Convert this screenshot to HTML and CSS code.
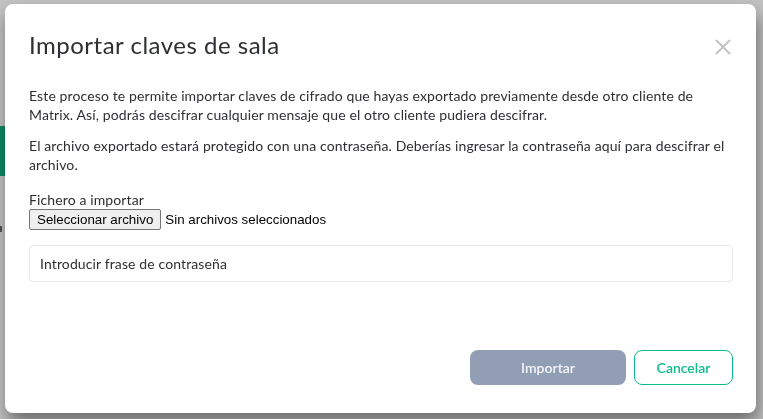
FILE: index.html
```html
<!DOCTYPE html>
<html lang="es">
<head>
<meta charset="utf-8">
<title>Importar claves de sala</title>
<link rel="stylesheet" href="styles.css">
</head>
<body>
<div class="app">
  <div class="app-rail">
    <div class="rail-green"></div>
    <div class="rail-mark"></div>
  </div>
</div>
<div class="overlay">
  <div class="dialog" role="dialog">
    <div class="dialog-header">
      <h1 class="dialog-title">Importar claves de sala</h1>
      <button class="dialog-close" aria-label="Cerrar">
        <svg width="16" height="16" viewBox="0 0 16 16"><path d="M1 1L15 15M15 1L1 15" stroke="#c1c1c1" stroke-width="1.8" fill="none"/></svg>
      </button>
    </div>
    <div class="dialog-content">
      <p class="para">Este proceso te permite importar claves de cifrado que hayas exportado previamente desde otro cliente de Matrix. Así, podrás descifrar cualquier mensaje que el otro cliente pudiera descifrar.</p>
      <p class="para">El archivo exportado estará protegido con una contraseña. Deberías ingresar la contraseña aquí para descifrar el archivo.</p>
      <div class="file-field">
        <label class="file-label">Fichero a importar</label>
        <div class="file-row">
          <button class="file-btn">Seleccionar archivo</button>
          <span class="file-status">Sin archivos seleccionados</span>
        </div>
      </div>
      <div class="field">
        <input class="field-input" type="password" placeholder="Introducir frase de contraseña">
      </div>
    </div>
    <div class="dialog-buttons">
      <button class="btn btn-primary" disabled>Importar</button>
      <button class="btn btn-outline">Cancelar</button>
    </div>
  </div>
</div>
</body>
</html>
```
FILE: styles.css
```css
* { box-sizing: border-box; }
html, body { margin: 0; height: 100%; }
body {
  background: #c3c3c3;
  font-family: "Lato", "Noto Sans", sans-serif;
  overflow: hidden;
}
.app {
  height: 100%;
  display: flex;
}
.app-rail {
  width: 5px;
  padding-top: 126px;
  display: flex;
  flex-direction: column;
}
.rail-green { height: 50px; background: #0d8a68; }
.rail-mark { height: 6px; margin-top: 50px; background: #555; width: 2px; }

.overlay {
  position: fixed;
  inset: 0;
  display: flex;
  align-items: flex-start;
  padding: 4px 0 0 5px;
}
.dialog {
  width: 751px;
  height: 409px;
  background: #ffffff;
  border-radius: 8px;
  box-shadow: 2px 10px 18px rgba(0, 0, 0, 0.45);
  padding: 26px 23px 28px 24px;
  display: flex;
  flex-direction: column;
  color: #2e2f32;
}
.dialog-header {
  display: flex;
  align-items: flex-start;
  justify-content: space-between;
}
.dialog-title {
  margin: 0;
  font-size: 24px;
  letter-spacing: 0.5px;
  font-weight: 400;
  line-height: 30px;
  color: #2e2f32;
}
.dialog-close {
  border: 0;
  background: none;
  padding: 0;
  margin: 9px 2px 0 0;
  width: 16px;
  height: 16px;
  cursor: pointer;
}
.dialog-content {
  flex: 1;
  padding-top: 26px;
  font-size: 14px;
  letter-spacing: 0.12px;
  line-height: 19px;
}
.para { margin: 0 0 12px; }
.file-field { margin-top: 17px; }
.file-label { display: block; line-height: 18px; }
.file-row {
  display: flex;
  align-items: center;
  gap: 4px;
  font-family: "Liberation Sans", Arial, sans-serif;
  font-size: 13.33px;
  letter-spacing: 0;
  color: #000;
}
.file-btn {
  font-family: "Liberation Sans", Arial, sans-serif;
  font-size: 13.33px;
  height: 21px;
  padding: 0 7px;
  background: #efefef;
  border: 1px solid #767676;
  border-radius: 2px;
  color: #000;
}
.field { margin-top: 15px; }
.field-input {
  width: 100%;
  height: 37px;
  border: 1px solid #e7e7e7;
  border-radius: 4px;
  padding: 0 10px;
  font-family: "Lato", "Noto Sans", sans-serif;
  font-size: 14px;
  letter-spacing: 0.12px;
  outline: none;
}
.field-input::placeholder { color: #2e2f32; opacity: 1; }
.dialog-buttons {
  display: flex;
  justify-content: flex-end;
  gap: 8px;
}
.btn {
  height: 35px;
  border-radius: 8px;
  font-family: "Lato", "Noto Sans", sans-serif;
  font-size: 14px;
  font-weight: 600;
  cursor: pointer;
}
.btn-primary {
  width: 156px;
  background: #929eb4;
  border: 0;
  color: #f4f6f9;
}
.btn-outline {
  width: 99px;
  background: #fff;
  border: 1px solid #0dbd8b;
  color: #0dbd8b;
}
```
